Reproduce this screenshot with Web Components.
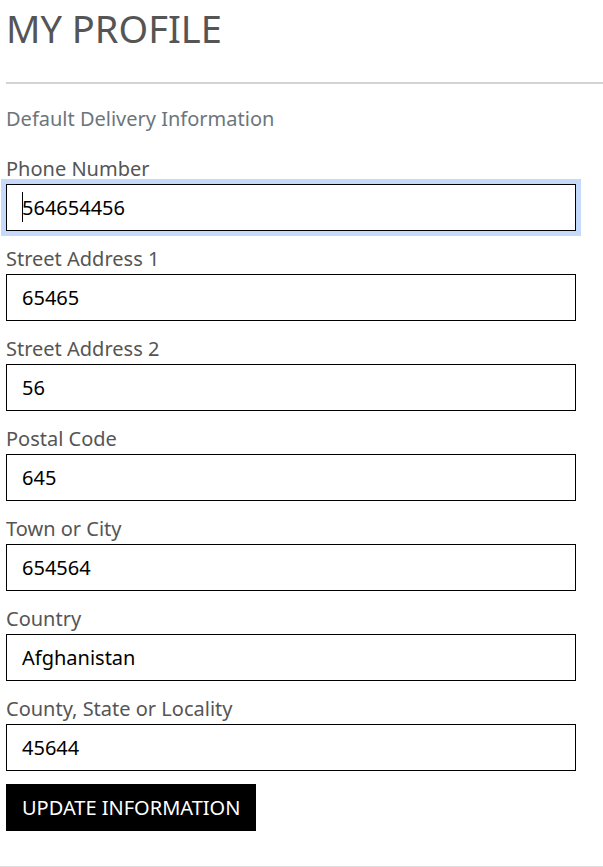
<!DOCTYPE html>
<html lang="en">
<head>
<meta charset="utf-8">
<meta name="viewport" content="width=device-width, initial-scale=1">
<title>My Profile</title>
<style>
  body {
    margin: 0;
    background: #fff;
    color: #555;
    font: 20px/30px "Noto Sans", "Open Sans", sans-serif;
  }
</style>
</head>
<body>
<profile-page>
  <span slot="title">MY PROFILE</span>
  <span slot="subtitle">Default Delivery Information</span>
  <profile-form>
    <text-field name="phone" type="tel" value="564654456" active>Phone Number</text-field>
    <text-field name="street1" value="65465">Street Address 1</text-field>
    <text-field name="street2" value="56">Street Address 2</text-field>
    <text-field name="postcode" value="645">Postal Code</text-field>
    <text-field name="town" value="654564">Town or City</text-field>
    <select-field name="country" value="Afghanistan">Country</select-field>
    <text-field name="county" value="45644">County, State or Locality</text-field>
    <action-button>UPDATE INFORMATION</action-button>
  </profile-form>
</profile-page>
<script>
  const fieldStyles = `
    :host { display: block; }
    label { display: block; }
    .control { position: relative; }
    input, select {
      appearance: none;
      display: block;
      box-sizing: border-box;
      width: 100%;
      height: 47px;
      margin: 0;
      padding: 0 15px;
      border: 1px solid #000;
      border-radius: 0;
      outline: 0;
      background: #fff;
      color: #000;
      font: inherit;
    }
    input:focus, select:focus, :host([active]) input { box-shadow: 0 0 0 5px #c5d9fa; }
    :host([active]) input { caret-color: transparent; }
    :host([active]) .control::after {
      content: "";
      position: absolute;
      left: 16px;
      top: 8px;
      width: 1px;
      height: 30px;
      background: #000;
    }
  `;

  class ProfilePage extends HTMLElement {
    constructor() {
      super();
      this.attachShadow({ mode: "open" }).innerHTML = `
        <style>
          :host { display: block; padding: 4px 0 0 6px; }
          h1 { margin: 0; font-size: 38px; line-height: 48px; font-weight: 400; }
          hr { margin: 30px 0 20px; border: 0; border-top: 2px solid #d3d3d3; }
          p { margin: 0 0 20px; color: #6c757d; }
          .end { margin: 35px 0 0 -6px; border-top: 1px solid #dedede; }
        </style>
        <main>
          <h1><slot name="title"></slot></h1>
          <hr>
          <p><slot name="subtitle"></slot></p>
          <slot></slot>
          <hr class="end">
        </main>`;
    }
  }

  class ProfileForm extends HTMLElement {
    constructor() {
      super();
      this.attachShadow({ mode: "open" }).innerHTML = `
        <style>
          :host { display: block; padding-right: 27px; }
          form { display: flex; flex-direction: column; gap: 13px; }
        </style>
        <form><slot></slot></form>`;
    }
  }

  class TextField extends HTMLElement {
    connectedCallback() {
      if (this.shadowRoot) return;
      const root = this.attachShadow({ mode: "open" });
      root.innerHTML = `
        <style>${fieldStyles}</style>
        <label for="field"><slot></slot></label>
        <div class="control"><input id="field"></div>`;
      const input = root.querySelector("input");
      input.type = this.getAttribute("type") || "text";
      input.name = this.getAttribute("name");
      input.value = this.getAttribute("value");
      input.addEventListener("input", () => this.removeAttribute("active"));
      input.addEventListener("pointerdown", () => this.removeAttribute("active"));
    }
  }

  class SelectField extends HTMLElement {
    connectedCallback() {
      if (this.shadowRoot) return;
      const root = this.attachShadow({ mode: "open" });
      root.innerHTML = `
        <style>${fieldStyles}</style>
        <label for="field"><slot></slot></label>
        <div class="control"><select id="field"></select></div>`;
      const select = root.querySelector("select");
      select.name = this.getAttribute("name");
      select.add(new Option(this.getAttribute("value")));
    }
  }

  class ActionButton extends HTMLElement {
    constructor() {
      super();
      this.attachShadow({ mode: "open" }).innerHTML = `
        <style>
          :host { display: block; }
          button {
            display: block;
            height: 47px;
            margin: 0;
            padding: 0 16px;
            border: 0;
            background: #000;
            color: #fff;
            font: inherit;
            cursor: pointer;
          }
        </style>
        <button type="button"><slot></slot></button>`;
    }
  }

  customElements.define("profile-page", ProfilePage);
  customElements.define("profile-form", ProfileForm);
  customElements.define("text-field", TextField);
  customElements.define("select-field", SelectField);
  customElements.define("action-button", ActionButton);
</script>
</body>
</html>
